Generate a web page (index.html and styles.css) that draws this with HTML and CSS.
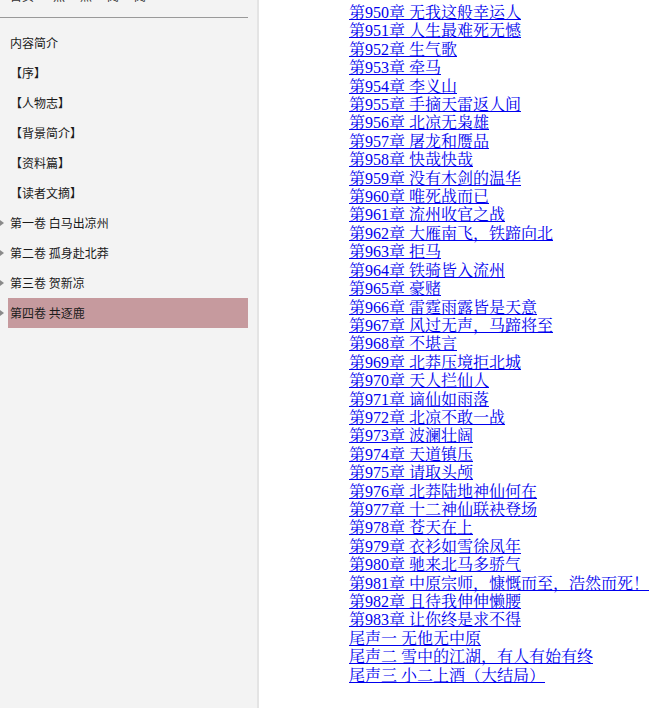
FILE: index.html
```html
<!DOCTYPE html>
<html lang="zh-CN">
<head>
<meta charset="utf-8">
<title>雪中悍刀行</title>
<link rel="stylesheet" href="styles.css">
</head>
<body>
<div class="page">
  <aside class="sidebar">
    <div class="side-head">
      <div class="side-tools">
        <span class="tool tool-first">首页</span>
        <span class="tool">热</span>
        <span class="tool">点</span>
        <span class="tool">阅</span>
        <span class="tool">阅</span>
      </div>
    </div>
    <ul class="side-list">
      <li class="side-item">内容简介</li>
      <li class="side-item">【序】</li>
      <li class="side-item">【人物志】</li>
      <li class="side-item">【背景简介】</li>
      <li class="side-item">【资料篇】</li>
      <li class="side-item">【读者文摘】</li>
      <li class="side-item vol">第一卷 白马出凉州</li>
      <li class="side-item vol">第二卷 孤身赴北莽</li>
      <li class="side-item vol">第三卷 贺新凉</li>
      <li class="side-item vol active">第四卷 共逐鹿</li>
    </ul>
  </aside>
  <main class="content">
    <ul class="chapters">
      <li><a href="#">第950章 无我这般幸运人</a></li>
      <li><a href="#">第951章 人生最难死无憾</a></li>
      <li><a href="#">第952章 生气歌</a></li>
      <li><a href="#">第953章 牵马</a></li>
      <li><a href="#">第954章 李义山</a></li>
      <li><a href="#">第955章 手摘天雷返人间</a></li>
      <li><a href="#">第956章 北凉无枭雄</a></li>
      <li><a href="#">第957章 屠龙和赝品</a></li>
      <li><a href="#">第958章 快哉快哉</a></li>
      <li><a href="#">第959章 没有木剑的温华</a></li>
      <li><a href="#">第960章 唯死战而已</a></li>
      <li><a href="#">第961章 流州收官之战</a></li>
      <li><a href="#">第962章 大雁南飞，铁蹄向北</a></li>
      <li><a href="#">第963章 拒马</a></li>
      <li><a href="#">第964章 铁骑皆入流州</a></li>
      <li><a href="#">第965章 豪赌</a></li>
      <li><a href="#">第966章 雷霆雨露皆是天意</a></li>
      <li><a href="#">第967章 风过无声，马蹄将至</a></li>
      <li><a href="#">第968章 不堪言</a></li>
      <li><a href="#">第969章 北莽压境拒北城</a></li>
      <li><a href="#">第970章 天人拦仙人</a></li>
      <li><a href="#">第971章 谪仙如雨落</a></li>
      <li><a href="#">第972章 北凉不敢一战</a></li>
      <li><a href="#">第973章 波澜壮阔</a></li>
      <li><a href="#">第974章 天道镇压</a></li>
      <li><a href="#">第975章 请取头颅</a></li>
      <li><a href="#">第976章 北莽陆地神仙何在</a></li>
      <li><a href="#">第977章 十二神仙联袂登场</a></li>
      <li><a href="#">第978章 苍天在上</a></li>
      <li><a href="#">第979章 衣衫如雪徐凤年</a></li>
      <li><a href="#">第980章 驰来北马多骄气</a></li>
      <li><a href="#">第981章 中原宗师，慷慨而至，浩然而死！</a></li>
      <li><a href="#">第982章 且待我伸伸懒腰</a></li>
      <li><a href="#">第983章 让你终是求不得</a></li>
      <li><a href="#">尾声一 无他无中原</a></li>
      <li><a href="#">尾声二 雪中的江湖，有人有始有终</a></li>
      <li><a href="#">尾声三 小二上酒（大结局）</a></li>
    </ul>
  </main>
</div>
</body>
</html>
```

FILE: styles.css
```css
html, body {
  margin: 0;
  padding: 0;
  background: #ffffff;
}

.page {
  display: flex;
  min-height: 708px;
}

.sidebar {
  width: 257px;
  flex: 0 0 257px;
  background: #f3f3f3;
  border-right: 2px solid #e4e4e4;
  font-family: "Noto Sans CJK SC", "Microsoft YaHei", sans-serif;
  font-size: 12px;
  color: #1a1a1a;
  overflow: hidden;
}

.side-head {
  width: 248px;
  height: 17px;
  border-bottom: 1px solid #999999;
  overflow: hidden;
}

.side-tools {
  display: flex;
  padding-left: 10px;
  margin-top: -10px;
  line-height: 12px;
  color: #333;
}

.tool {
  margin-right: 15px;
}

.tool-first {
  margin-right: 19px;
}

.side-list {
  list-style: none;
  margin: 10px 0 0 0;
  padding: 0;
}

.side-item {
  position: relative;
  margin-left: 8px;
  width: 238px;
  height: 30px;
  line-height: 30px;
  padding-left: 2px;
  white-space: nowrap;
}

.side-item.vol::before {
  content: "";
  position: absolute;
  left: -8px;
  top: 12px;
  width: 0;
  height: 0;
  border-top: 3px solid transparent;
  border-bottom: 3px solid transparent;
  border-left: 4px solid #8a8a8a;
}

.side-item.active {
  background: #c69a9e;
}

.content {
  flex: 1;
  padding-left: 90px;
  padding-top: 4px;
}

.chapters {
  list-style: none;
  margin: 0;
  padding: 0;
  font-family: "Liberation Serif", "Noto Serif CJK SC", "Noto Sans CJK SC", serif;
  font-size: 16px;
  line-height: 18.4px;
}

.chapters li {
  white-space: nowrap;
}

.chapters a {
  color: #0000ee;
  text-decoration: underline;
}
```
